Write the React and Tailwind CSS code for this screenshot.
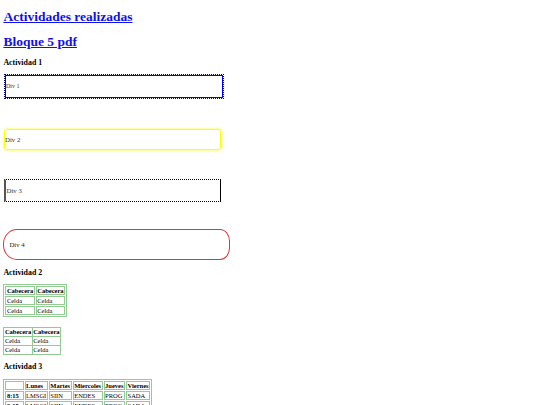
import React from "react";

const cellA = "border border-[#94ca94] px-[0.5px] leading-[7px] text-left";
const cellB = "border border-[#94ca94] px-[0.5px] leading-[7.8px] text-left";

const horario = [
  ["8:15", "LMSGI", "SIIN", "ENDES", "PROG", "SADA"],
  ["9:15", "LMSGI", "SIIN", "ENDES", "PROG", "SADA"],
  ["10:15", "LMSGI", "SIIN", "ENDES", "PROG", "SADA"],
];

export default function App() {
  return (
    <div
      className="min-h-screen bg-white flex flex-col items-start pl-[3.4px] pb-4 text-black"
      style={{ fontFamily: '"Liberation Serif", "Times New Roman", serif' }}
    >
      <h1 className="mt-[9px] text-[13.5px] leading-[15.5px] font-bold">
        <a href="#" className="text-[#1010e8] underline">
          Actividades realizadas
        </a>
      </h1>
      <h1 className="mt-[9.1px] text-[13.5px] leading-[15.5px] font-bold">
        <a href="#" className="text-[#1010e8] underline">
          Bloque 5 pdf
        </a>
      </h1>

      <h3 className="mt-[9.1px] text-[7.9px] leading-[9px] font-bold">Actividad 1</h3>

      <div className="mt-[7.8px] ml-[1.5px] w-[218px] h-[23px] flex items-center border-[1.5px] border-[#0000ff] outline-[1.5px] outline-dotted outline-[#00008b] text-[6px] text-[#333]">
        Div 1
      </div>

      <div className="mt-[31.5px] ml-[0.6px] w-[217px] h-[21px] flex items-center border-[1.5px] border-[#ffff00] rounded-[3px] shadow-[0_0_3px_#ffff00] text-[6.8px] text-[#333]">
        Div 2
      </div>

      <div className="mt-[29px] ml-[0.6px] w-[217px] h-[23px] flex items-center border-y border-dotted border-black border-l-2 border-l-[#555] [border-left-style:solid] border-r border-r-black [border-right-style:solid] text-[6.8px] text-[#333]">
        <span className="ml-[0.5px]">Div 3</span>
      </div>

      <div className="mt-[27px] w-[227px] h-[31px] flex items-center border border-[#d43a3a] rounded-[14px_10px_10px_14px/15px_12px_12px_15px] pl-[5px] text-[6.8px] text-[#222]">
        Div 4
      </div>

      <h3 className="mt-[7.3px] text-[7.9px] leading-[9px] font-bold">Actividad 2</h3>

      <table className="mt-[7.7px] border border-[#94ca94] border-separate border-spacing-[1px] text-[6.5px]">
        <tbody>
          <tr>
            <th className={cellA}>Cabecera</th>
            <th className={cellA}>Cabecera</th>
          </tr>
          <tr>
            <td className={cellA}>Celda</td>
            <td className={cellA}>Celda</td>
          </tr>
          <tr>
            <td className={cellA}>Celda</td>
            <td className={cellA}>Celda</td>
          </tr>
        </tbody>
      </table>

      <table className="mt-[9.9px] border-collapse text-[6.5px]">
        <tbody>
          <tr>
            <th className={cellB}>Cabecera</th>
            <th className={cellB}>Cabecera</th>
          </tr>
          <tr>
            <td className={cellB}>Celda</td>
            <td className={cellB}>Celda</td>
          </tr>
          <tr>
            <td className={cellB}>Celda</td>
            <td className={cellB}>Celda</td>
          </tr>
        </tbody>
      </table>

      <h3 className="mt-[7.5px] text-[7.9px] leading-[9px] font-bold">Actividad 3</h3>

      <table className="mt-[8.2px] border border-[#94ca94] border-separate border-spacing-[1px] text-[6.5px]">
        <tbody>
          <tr>
            <th className={cellA + " w-[15px]"}></th>
            <th className={cellA + " text-center"}>Lunes</th>
            <th className={cellA + " text-center"}>Martes</th>
            <th className={cellA + " text-center"}>Miercoles</th>
            <th className={cellA + " text-center"}>Jueves</th>
            <th className={cellA + " text-center"}>Viernes</th>
          </tr>
          {horario.map((row) => (
            <tr key={row[0]}>
              <th className={cellA}>{row[0]}</th>
              {row.slice(1).map((c, i) => (
                <td key={i} className={cellA}>
                  {c}
                </td>
              ))}
            </tr>
          ))}
        </tbody>
      </table>
    </div>
  );
}
